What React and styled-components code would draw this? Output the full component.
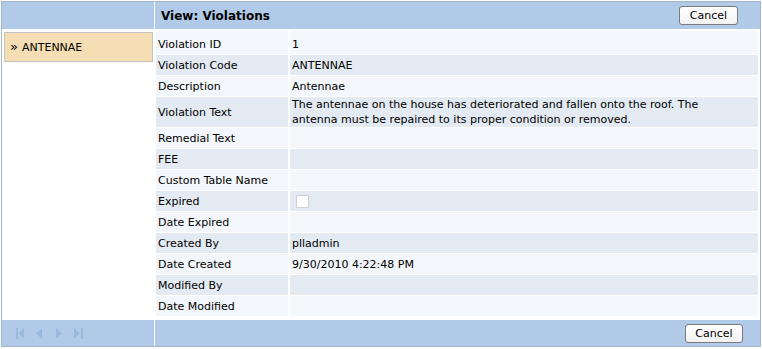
import React from 'react';
import styled, { createGlobalStyle } from 'styled-components';

const GlobalStyle = createGlobalStyle`
  html, body {
    margin: 0;
    padding: 0;
    background: #ffffff;
  }
  body {
    font-family: 'DejaVu Sans', Verdana, sans-serif;
    font-size: 11px;
    color: #000000;
  }
`;

const Frame = styled.div`
  margin: 1px 0 0 1px;
  width: 758px;
  height: 344px;
  border: 1px solid #a3b5ca;
  background: #ffffff;
  display: grid;
  grid-template-columns: 152px 1fr;
  grid-template-rows: 28px 1fr 27px;
  column-gap: 1px;
`;

const HeaderBar = styled.div`
  background: #b0cae7;
  display: flex;
  align-items: center;
  justify-content: space-between;
  padding: 0 ${(p) => p.$padRight || 0}px 0 6px;
  margin-bottom: 1px;
`;

const FooterBar = styled(HeaderBar)`
  margin: 1px 0 0;
`;

const Title = styled.h1`
  margin: 0;
  font-size: 12px;
  font-weight: bold;
  color: #000;
`;

const Button = styled.button`
  font-family: 'DejaVu Sans', Verdana, sans-serif;
  font-size: 11px;
  color: #000;
  width: ${(p) => p.$w || 59}px;
  height: 19px;
  padding: 0;
  border: 1px solid #7b7b7b;
  border-radius: 3px;
  background: linear-gradient(#ffffff, #f2f2f2);
  cursor: pointer;
`;

const SideList = styled.div`
  padding: 2px 1px 0 2px;
`;

const SideItem = styled.div`
  height: 28px;
  border: 1px solid #c3c3c3;
  background: #f5deb3;
  display: flex;
  align-items: center;
  padding-left: 5px;
  gap: 4px;
  font-size: 11px;

  b {
    font-size: 13px;
    font-weight: normal;
    line-height: 1;
    margin-top: -1px;
  }
`;

const Table = styled.div`
  padding: 1px 2px 0 1px;
  display: grid;
  grid-template-columns: 132px 1fr;
  column-gap: 2px;
  row-gap: 1px;
  align-content: start;
`;

const Cell = styled.div`
  background: ${(p) => (p.$odd ? '#e3eaf2' : '#f3f6fa')};
  min-height: 20px;
  line-height: 15px;
  padding: ${(p) => (p.$first ? '3px' : '0')} 12px 0 2px;
  display: flex;
  align-items: center;
`;

const Checkbox = styled.span`
  display: inline-block;
  width: 11px;
  height: 11px;
  border: 1px solid #cfcfcf;
  border-radius: 1px;
  background: #ffffff;
  margin-left: 4px;
`;

const Pager = styled.div`
  display: flex;
  align-items: center;
  padding-left: 6px;
  svg {
    display: block;
  }
`;

const NAV = '#9ab7de';

const navShapes = {
  first: (
    <>
      <rect x="2" y="0" width="2" height="11" fill={NAV} />
      <path d="M10 0 L4.5 5.5 L10 11 Z" fill={NAV} />
    </>
  ),
  prev: <path d="M8 0 L2 5.5 L8 11 Z" fill={NAV} />,
  next: <path d="M2 0 L8 5.5 L2 11 Z" fill={NAV} />,
  last: (
    <>
      <path d="M0 0 L5.5 5.5 L0 11 Z" fill={NAV} />
      <rect x="7" y="0" width="2" height="11" fill={NAV} />
    </>
  ),
};

const NavIcon = ({ kind }) => (
  <svg width="20" height="11" viewBox="0 0 20 11">
    {navShapes[kind]}
  </svg>
);

const rows = [
  ['Violation ID', '1'],
  ['Violation Code', 'ANTENNAE'],
  ['Description', 'Antennae'],
  [
    'Violation Text',
    'The antennae on the house has deteriorated and fallen onto the roof. The antenna must be repaired to its proper condition or removed.',
  ],
  ['Remedial Text', ''],
  ['FEE', ''],
  ['Custom Table Name', ''],
  ['Expired', 'checkbox'],
  ['Date Expired', ''],
  ['Created By', 'plladmin'],
  ['Date Created', '9/30/2010 4:22:48 PM'],
  ['Modified By', ''],
  ['Date Modified', ''],
];

export default function App() {
  return (
    <>
      <GlobalStyle />
      <Frame>
        <HeaderBar />
        <HeaderBar $padRight={22}>
          <Title>View: Violations</Title>
          <Button>Cancel</Button>
        </HeaderBar>

        <SideList>
          <SideItem>
            <b>»</b>
            <span>ANTENNAE</span>
          </SideItem>
        </SideList>

        <Table>
          {rows.map(([label, value], i) => (
            <React.Fragment key={label}>
              <Cell $odd={i % 2 === 1} $first={i === 0}>{label}</Cell>
              <Cell $odd={i % 2 === 1} $first={i === 0}>
                {value === 'checkbox' ? <Checkbox /> : value}
              </Cell>
            </React.Fragment>
          ))}
        </Table>

        <FooterBar>
          <Pager>
            <NavIcon kind="first" />
            <NavIcon kind="prev" />
            <NavIcon kind="next" />
            <NavIcon kind="last" />
          </Pager>
        </FooterBar>
        <FooterBar $padRight={17}>
          <span />
          <Button $w={58}>Cancel</Button>
        </FooterBar>
      </Frame>
    </>
  );
}
